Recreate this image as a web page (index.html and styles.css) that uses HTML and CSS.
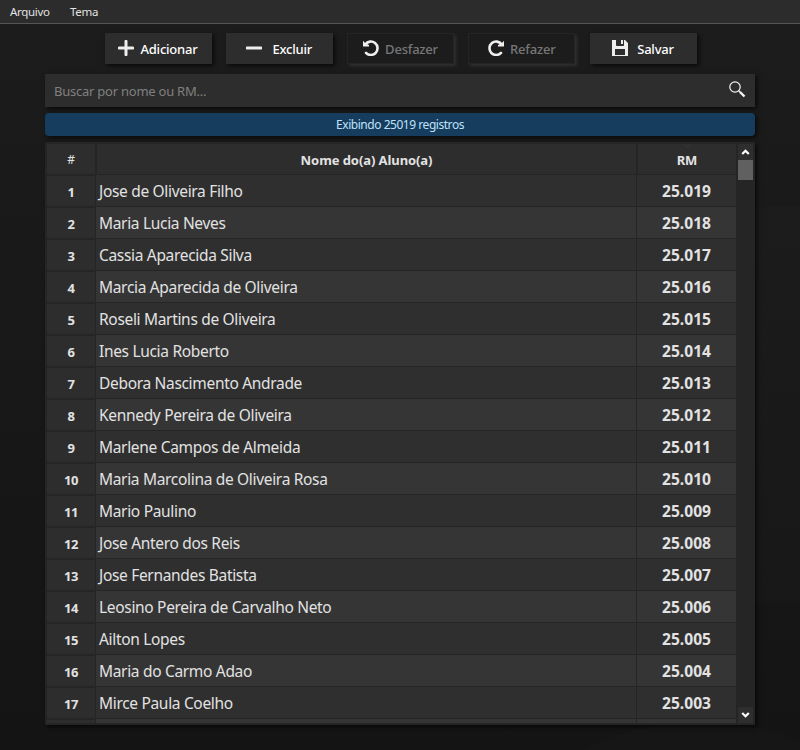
FILE: index.html
```
<!DOCTYPE html>
<html lang="pt-BR">
<head>
<meta charset="utf-8">
<title>Alunos</title>
<link rel="stylesheet" href="styles.css">
</head>
<body>
<nav class="menubar"><span class="menu-file">Arquivo</span><span class="menu-theme">Tema</span></nav>
<main class="page">
  <div class="toolbar">
    <button class="btn add"><svg width="16" height="16" viewBox="0 0 16 16"><path d="M8 1.300v13.400M1.300 8h13.400" stroke="#eee" stroke-width="3" stroke-linecap="round"/></svg><span>Adicionar</span></button>
    <button class="btn del"><svg width="16" height="16" viewBox="0 0 16 16"><path d="M1 8h14" stroke="#eee" stroke-width="3" stroke-linecap="round"/></svg><span>Excluir</span></button>
    <button class="btn off undo"><svg width="16" height="16" viewBox="0 0 16 16"><path d="M2.400 4.300A6.700 6.700 0 1 1 3 12.900" fill="none" stroke="#eee" stroke-width="2.600" stroke-linecap="round"/><path d="M0 .7L2.100 3 6 5v1.600H.7Q0 6.600 0 5.900Z" fill="#eee"/></svg><span>Desfazer</span></button>
    <button class="btn off redo"><svg width="16" height="16" viewBox="0 0 16 16"><path d="M13.600 4.300A6.700 6.700 0 1 0 13 12.900" fill="none" stroke="#eee" stroke-width="2.600" stroke-linecap="round"/><path d="M16 .7L13.900 3 10 5v1.600h5.300Q16 6.600 16 5.900Z" fill="#eee"/></svg><span>Refazer</span></button>
    <button class="btn save"><svg width="16" height="16" viewBox="0 0 16 16"><path fill-rule="evenodd" d="M0 0h4v5.200q0 .8.8.8h6.400q.8 0 .8-.8V0h1l3 3v13H0ZM3 9v6h10V9ZM9 0h2v4H9Z" fill="#eee"/></svg><span>Salvar</span></button>
  </div>
  <div class="search"><span>Buscar por nome ou RM...</span><svg width="17" height="17" viewBox="0 0 17 17" fill="none" stroke="#f4f4f4"><circle cx="6" cy="6" r="5.200" stroke-width="1.200"/><path d="M9.700 9.700l1.800 1.800" stroke-width="1.300"/><path d="M11 11l4.500 4.500" stroke-width="2.400"/></svg></div>
  <div class="status"><span>Exibindo 25019 registros</span></div>
  <section class="table">
    <div class="grid" id="grid">
      <div class="row head"><div class="num">#</div><div class="name"><span>Nome do(a) Aluno(a)</span></div><div class="rm"><svg class="sort" width="7" height="4" viewBox="0 0 7 4"><path d="M.5.500l3 3 3-3" fill="none" stroke="#3a3a3a"/></svg>RM</div></div>
    </div>
    <div class="scroll">
      <div class="arrow"><svg width="9" height="8" viewBox="0 0 9 8"><path d="M1.200 6L4.500 2.700 7.800 6" fill="none" stroke="#fff" stroke-width="2.200"/></svg></div>
      <div class="thumb"></div>
      <div class="arrow down"><svg width="9" height="8" viewBox="0 0 9 8"><path d="M1.200 2L4.500 5.300 7.800 2" fill="none" stroke="#fff" stroke-width="2.200"/></svg></div>
    </div>
  </section>
</main>
<script src="app.js"></script>
</body>
</html>
```
FILE: styles.css
```
* { box-sizing: border-box; }
body {
  margin: 0; width: 800px; height: 750px; overflow: hidden;
  font: 12px "Noto Sans", "Open Sans", sans-serif; color: #e2e2e2;
  background:
    radial-gradient(circle 200px at 785px 405px, rgba(255,255,255,.006) 99%, transparent 100%),
    radial-gradient(circle 250px at 700px 970px, rgba(255,255,255,.008) 99%, transparent 100%),
    linear-gradient(#1c1c1c, #141414);
}
.menubar { height: 24px; background: #2c2c2c; border-bottom: 1px solid #555; display: flex; gap: 20px; padding-left: 10px; line-height: 24px; font-size: 11.500px; letter-spacing: -.3px; }
.menu-file { width: 40px; }
.page { padding: 9px 45px 0; }
.toolbar { display: flex; justify-content: center; gap: 14.250px; height: 31px; padding-left: 1px; }
.btn { width: 107px; flex: none; height: 31px; border: 0; padding: 0; background: #2d2d2d; color: #fff; font: 500 13px "Noto Sans", sans-serif; display: flex; align-items: center; justify-content: center; gap: 6px; box-shadow: 2px 2px 4px rgba(0,0,0,.65); letter-spacing: -.22px; }
.btn svg { flex: none; position: relative; top: -1px; }
.btn span { line-height: 31px; padding-top: 1px; }
.del { gap: 10px; }
.save { gap: 9px; }
.off { background: #1c1c1c; color: #777; border: 1px solid #242424; box-shadow: 2px 2px 3px #303030; }
.search { height: 33px; margin-top: 10px; background: #2d2d2d; box-shadow: 2px 2px 4px rgba(0,0,0,.65); display: flex; justify-content: space-between; align-items: center; padding: 0 9px 0 9px; font-size: 13px; letter-spacing: -.24px; color: #808080; }
.search svg { position: relative; top: -1px; }
.status { height: 23px; margin-top: 6px; border-radius: 4px; background: #163d5e; color: #bfe2fa; box-shadow: 2px 2px 4px rgba(0,0,0,.65); text-align: center; line-height: 24px; font-size: 12px; letter-spacing: -.46px; }
.table { height: 583px; margin-top: 6px; background: #252525; display: flex; padding: 2px; box-shadow: 2px 2px 4px rgba(0,0,0,.65); }
.grid { width: 689px; height: 579px; overflow: hidden; }
.row { display: grid; grid-template-columns: 48px 540px 99px; column-gap: 1px; height: 32px; }
.row > div { height: 31px; line-height: 32px; white-space: nowrap; }
.row .num { background: #2d2d2d; border-top: 1px solid #252525; text-align: center; font-weight: 700; font-size: 13px; letter-spacing: -.4px; }
.row .name { background: #2f2f2f; padding-left: 3px; font-size: 15.500px; letter-spacing: -.32px; }
.row .rm { background: #2f2f2f; text-align: center; font-weight: 700; font-size: 15.600px; }
.row.even .name, .row.even .rm { background: #353535; }
.row.head { height: 31px; }
.row.head > div { height: 30px; line-height: 32px; background: #2d2d2d; border: 0; font-size: 13px; font-weight: 700; text-align: center; padding: 0; letter-spacing: -.08px; }
.row.head .num { font-weight: 400; font-size: 12px; }
.row.head .name, .row.head .rm { border-left: 1px solid #252525; }
.row.head .rm { position: relative; }
.sort { position: absolute; left: 46px; top: 0; }
.scroll { width: 15px; margin-left: 2px; display: flex; flex-direction: column; }
.arrow { height: 16px; background: #2e2e2e; display: flex; align-items: center; justify-content: center; }
.thumb { height: 20px; background: #606060; }
.down { margin-top: auto; }
```
FILE: app.js
```
const names = [
  "Jose de Oliveira Filho", "Maria Lucia Neves", "Cassia Aparecida Silva",
  "Marcia Aparecida de Oliveira", "Roseli Martins de Oliveira", "Ines Lucia Roberto",
  "Debora Nascimento Andrade", "Kennedy Pereira de Oliveira", "Marlene Campos de Almeida",
  "Maria Marcolina de Oliveira Rosa", "Mario Paulino", "Jose Antero dos Reis",
  "Jose Fernandes Batista", "Leosino Pereira de Carvalho Neto", "Ailton Lopes",
  "Maria do Carmo Adao", "Mirce Paula Coelho", ""
];
const grid = document.getElementById("grid");
names.forEach((name, i) => {
  const row = document.createElement("div");
  row.className = i % 2 ? "row even" : "row";
  const cells = [["num", name && i + 1], ["name", name], ["rm", name && "25.0" + String(19 - i).padStart(2, "0")]];
  for (const [cls, text] of cells) {
    const cell = document.createElement("div");
    const label = document.createElement("span");
    cell.className = cls;
    label.textContent = text;
    cell.append(label);
    row.append(cell);
  }
  grid.append(row);
});
```
